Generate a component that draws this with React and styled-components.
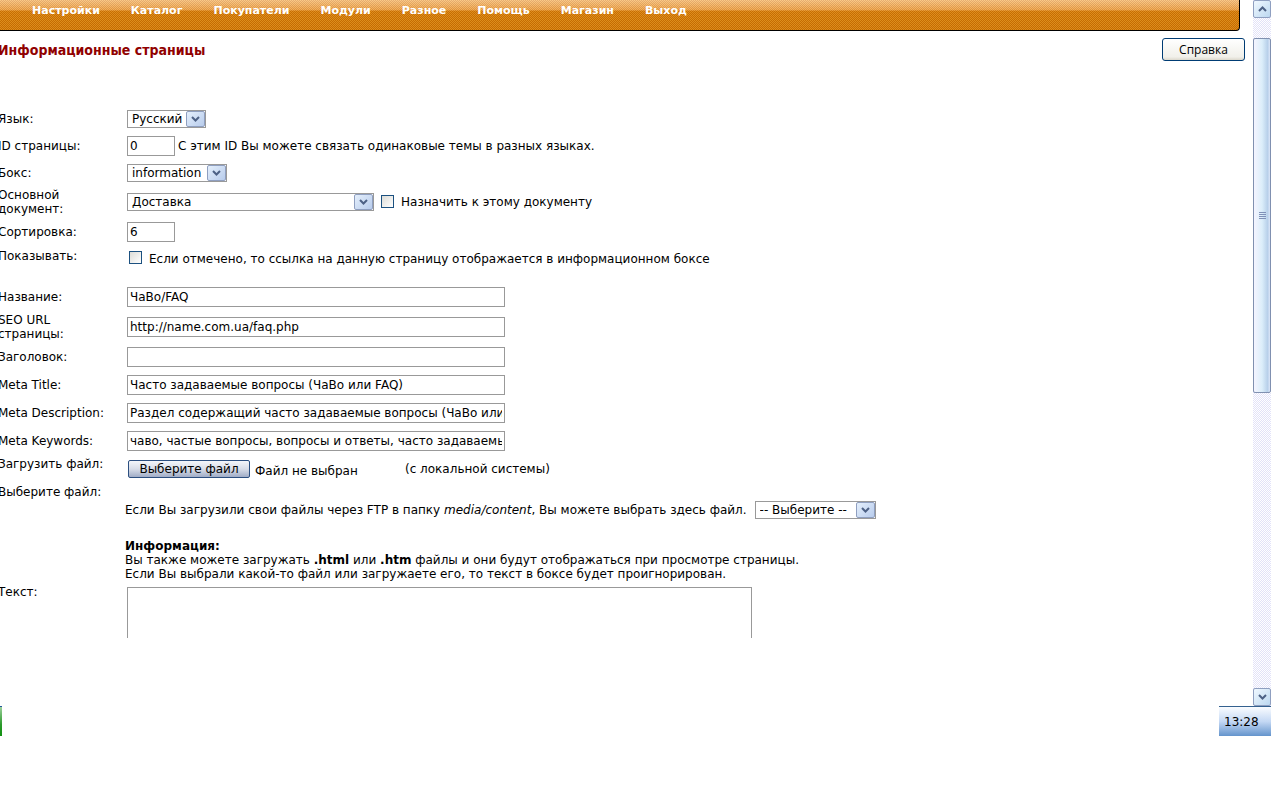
import React from 'react'
import styled, { createGlobalStyle } from 'styled-components'

const GlobalStyle = createGlobalStyle`
  * {
    box-sizing: border-box;
  }
  body {
    margin: 0;
    background: #fff;
    color: #000;
    font-family: 'DejaVu Sans', Verdana, sans-serif;
    font-size: 12px;
    line-height: 14px;
    overflow-x: hidden;
  }
  input,
  select,
  button,
  textarea {
    font: inherit;
    color: inherit;
    margin: 0;
  }
`

const Screen = styled.div`
  padding-right: 9px;
`

const Window = styled.div`
  display: flex;
  height: 706px;
`

const Page = styled.main`
  flex: 1;
  min-width: 0;
  padding-right: 8px;
  overflow: hidden;
`

const Nav = styled.nav`
  display: flex;
  gap: 31px;
  height: 31px;
  margin-right: 5px;
  padding: 4px 32px 0;
  border-right: 1px solid #000;
  border-bottom: 1px solid #000;
  border-bottom-right-radius: 4px;
  background: repeating-conic-gradient(rgba(190, 90, 0, 0.3) 0 25%, rgba(255, 190, 80, 0.35) 0 50%) 0 0 / 2px 2px,
    linear-gradient(#f8d4a8 0, #eaa85c 10px, #cc7604 11px, #c87200 100%);
  a {
    color: #fff;
    font-size: 11px;
    line-height: 13px;
    font-weight: bold;
    text-decoration: none;
  }
`

const Heading = styled.header`
  display: flex;
  justify-content: space-between;
  align-items: flex-start;
  height: 74px;
  padding-top: 7px;
  h1 {
    margin: 4px 0 0 -2px;
    color: #900000;
    font-family: 'DejaVu Sans Condensed', Tahoma, 'Open Sans', sans-serif;
    font-size: 14px;
    line-height: 16px;
    font-weight: bold;
  }
`

const HelpButton = styled.button`
  width: 83px;
  height: 23px;
  padding: 0;
  border: 1px solid #003c74;
  border-radius: 3px;
  font-family: 'Open Sans', Tahoma, sans-serif;
  background: linear-gradient(#fff, #f1f0ea 85%, #dcd8cc);
`

const Row = styled.div`
  display: grid;
  grid-template-columns: 127px 1fr;
  align-items: ${props => (props.$top ? 'start' : 'center')};
  min-height: ${props => props.$height || 28}px;
  margin-left: -2px;
  padding: ${props => (props.$top ? '2px 0 0' : '0')};
`

const Label = styled.label`
  width: ${props => (props.$narrow ? '80px' : 'auto')};
`

const Cell = styled.div`
  display: flex;
  align-items: center;
  gap: ${props => props.$gap || 3}px;
  padding-left: 2px;
  white-space: nowrap;
`

const TextInput = styled.input`
  width: ${props => (props.$small ? 48 : 378)}px;
  height: 20px;
  padding: 0 2px;
  border: 1px solid #999;
  border-radius: 0;
  background: #fff;
`

const SelectBox = styled.span`
  display: grid;
  align-items: center;
  width: ${props => props.$width}px;
  height: 18px;
  border: 1px solid #999;
  select {
    grid-area: 1 / 1;
    width: 100%;
    height: 16px;
    padding: 0 0 0 4px;
    border: 0;
    background: transparent;
    appearance: none;
  }
`

const Arrow = styled.span`
  grid-area: 1 / 1;
  justify-self: end;
  display: grid;
  place-items: center;
  width: 19px;
  height: 16px;
  border: 1px solid #8f9fc0;
  border-radius: 2px;
  background: linear-gradient(135deg, #e4effc, #b8ccec);
  pointer-events: none;
`

const Check = styled.input`
  appearance: none;
  width: 13px;
  height: 13px;
  border: 1px solid #1c5180;
  background: linear-gradient(135deg, #dcdcd7, #fff);
`

const CheckLine = styled.div`
  display: flex;
  align-items: center;
  gap: 7px;
  height: 34px;
  padding: 0 0 14px 4px;
  ${Check} {
    margin-bottom: 3px;
  }
`

const FileLine = styled.div`
  display: flex;
  align-items: center;
  padding: 3px 0 5px 3px;
`

const FileButton = styled.button`
  width: 122px;
  height: 18px;
  padding: 0;
  border: 1px solid #2c4f80;
  border-radius: 2px;
  background: linear-gradient(#f4f6fa, #d8dde8 50%, #a0acc6);
`

const FileName = styled.span`
  width: 155px;
  padding: 4px 0 0 5px;
`

const FtpLine = styled.div`
  display: flex;
  align-items: center;
  gap: 8px;
  padding-top: 16px;
  white-space: nowrap;
`

const Info = styled.p`
  margin: 20px 0 2px;
`

const TextArea = styled.textarea`
  display: block;
  width: 625px;
  height: 51px;
  margin: 2px 0 0 2px;
  border: 1px solid #999;
  border-bottom: 0;
  border-radius: 0;
  resize: none;
`

const Scrollbar = styled.div`
  display: flex;
  flex-direction: column;
  width: 18px;
  background: repeating-conic-gradient(#fff 0 25%, #e2e2f8 0 50%) 0 0 / 2px 2px;
`

const ScrollButton = styled.button`
  display: grid;
  place-items: center;
  height: 18px;
  padding: 0;
  border: 1px solid #8f9fc0;
  border-radius: 2px;
  background: linear-gradient(135deg, #f0f8ff, #bcd8f0);
`

const Track = styled.div`
  flex: 1;
  padding-top: 20px;
`

const Thumb = styled.div`
  display: grid;
  place-items: center;
  height: 355px;
  border: 1px solid #8090b0;
  border-radius: 2px;
  background: linear-gradient(90deg, #f4f4ff, #dceefa 50%, #b8d0ea 85%, #dce6f8);
`

const Taskbar = styled.footer`
  display: flex;
  justify-content: space-between;
  height: 30px;
`

const Start = styled.span`
  width: 2px;
  border-top: 1px solid #245a9c;
  background: linear-gradient(#9cd09c, #2c9a2c 60%, #109010);
`

const Clock = styled.time`
  width: 52px;
  padding: 8px 5px 0;
  border-top: 1px solid #34618f;
  background: linear-gradient(#fafcff, #c4d8f4 50%, #6494cc);
`

const menu = ['Настройки', 'Каталог', 'Покупатели', 'Модули', 'Разное', 'Помощь', 'Магазин', 'Выход']

const fields = [
  { id: 'title', label: 'Название:', value: 'ЧаВо/FAQ' },
  { id: 'seo', label: 'SEO URL страницы:', value: 'http://name.com.ua/faq.php', narrow: true, height: 32 },
  { id: 'heading', label: 'Заголовок:', value: '' },
  { id: 'metaTitle', label: 'Meta Title:', value: 'Часто задаваемые вопросы (ЧаВо или FAQ)' },
  {
    id: 'metaDescription',
    label: 'Meta Description:',
    value: 'Раздел содержащий часто задаваемые вопросы (ЧаВо или FAQ)'
  },
  {
    id: 'metaKeywords',
    label: 'Meta Keywords:',
    value: 'чаво, частые вопросы, вопросы и ответы, часто задаваемые вопросы'
  }
]

const Chevron = ({ up }) => (
  <svg width="9" height="6" viewBox="0 0 9 6" fill="none" stroke="#4d6185" strokeWidth="2">
    <path d={up ? 'M1 5l3.5-3.5L8 5' : 'M1 1l3.5 3.5L8 1'} />
  </svg>
)

const Select = ({ id, width, children }) => (
  <SelectBox $width={width}>
    <select id={id}>
      <option>{children}</option>
    </select>
    <Arrow>
      <Chevron />
    </Arrow>
  </SelectBox>
)

export default function App() {
  return (
    <Screen>
      <GlobalStyle />
      <Window>
        <Page>
          <Nav>
            {menu.map(item => (
              <a key={item} href="#">
                {item}
              </a>
            ))}
          </Nav>
          <Heading>
            <h1>Информационные страницы</h1>
            <HelpButton type="button">Справка</HelpButton>
          </Heading>
          <form>
            <Row $height={27}>
              <Label htmlFor="lang">Язык:</Label>
              <Cell>
                <Select id="lang" width={79}>
                  Русский
                </Select>
              </Cell>
            </Row>
            <Row $height={27}>
              <Label htmlFor="pageId">ID страницы:</Label>
              <Cell>
                <TextInput id="pageId" $small defaultValue="0" />
                <span>С этим ID Вы можете связать одинаковые темы в разных языках.</span>
              </Cell>
            </Row>
            <Row $height={27}>
              <Label htmlFor="box">Бокс:</Label>
              <Cell>
                <Select id="box" width={100}>
                  information
                </Select>
              </Cell>
            </Row>
            <Row $height={31}>
              <Label htmlFor="parent" $narrow>
                Основной документ:
              </Label>
              <Cell $gap={7}>
                <Select id="parent" width={247}>
                  Доставка
                </Select>
                <Check id="assign" type="checkbox" />
                <label htmlFor="assign">Назначить к этому документу</label>
              </Cell>
            </Row>
            <Row $height={30}>
              <Label htmlFor="sort">Сортировка:</Label>
              <Cell>
                <TextInput id="sort" $small defaultValue="6" />
              </Cell>
            </Row>
            <Row $top $height={36}>
              <Label htmlFor="visible">Показывать:</Label>
              <CheckLine>
                <Check id="visible" type="checkbox" />
                <label htmlFor="visible">
                  Если отмечено, то ссылка на данную страницу отображается в информационном боксе
                </label>
              </CheckLine>
            </Row>
            {fields.map(field => (
              <Row key={field.id} $height={field.height}>
                <Label htmlFor={field.id} $narrow={field.narrow}>
                  {field.label}
                </Label>
                <Cell>
                  <TextInput id={field.id} defaultValue={field.value} />
                </Cell>
              </Row>
            ))}
            <Row $top>
              <Label htmlFor="upload">Загрузить файл:</Label>
              <FileLine>
                <FileButton id="upload" type="button">
                  Выберите файл
                </FileButton>
                <FileName>Файл не выбран</FileName>
                <span>(с локальной системы)</span>
              </FileLine>
            </Row>
            <Row $top>
              <Label htmlFor="ftp">Выберите файл:</Label>
              <div>
                <FtpLine>
                  <span>
                    Если Вы загрузили свои файлы через FTP в папку <i>media/content</i>, Вы можете выбрать здесь файл.
                  </span>
                  <Select id="ftp" width={121}>
                    -- Выберите --
                  </Select>
                </FtpLine>
                <Info>
                  <b>Информация:</b>
                  <br />
                  Вы также можете загружать <b>.html</b> или <b>.htm</b> файлы и они будут отображаться при просмотре
                  страницы.
                  <br />
                  Если Вы выбрали какой-то файл или загружаете его, то текст в боксе будет проигнорирован.
                </Info>
              </div>
            </Row>
            <Row $top>
              <Label htmlFor="text">Текст:</Label>
              <TextArea id="text" />
            </Row>
          </form>
        </Page>
        <Scrollbar>
          <ScrollButton type="button" aria-label="Вверх">
            <Chevron up />
          </ScrollButton>
          <Track>
            <Thumb>
              <svg width="7" height="8" stroke="#8090b8" shapeRendering="crispEdges">
                <path d="M0 .5h7M0 2.5h7M0 4.5h7M0 6.5h7" />
              </svg>
            </Thumb>
          </Track>
          <ScrollButton type="button" aria-label="Вниз">
            <Chevron />
          </ScrollButton>
        </Scrollbar>
      </Window>
      <Taskbar>
        <Start />
        <Clock>13:28</Clock>
      </Taskbar>
    </Screen>
  )
}
